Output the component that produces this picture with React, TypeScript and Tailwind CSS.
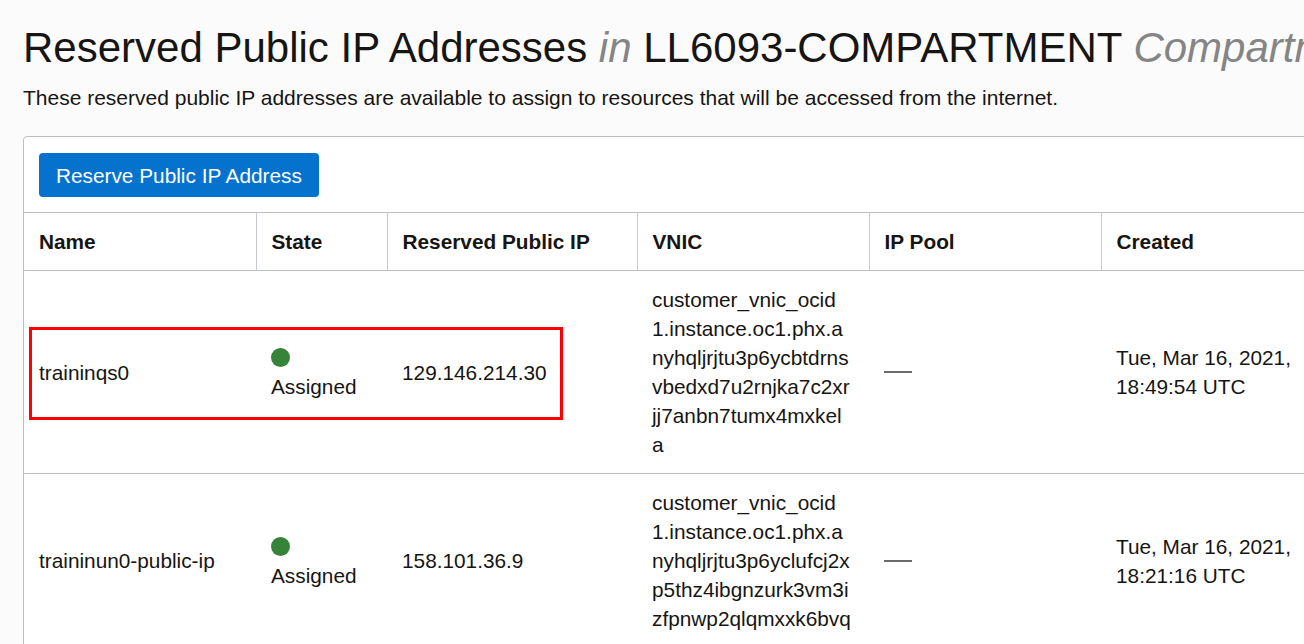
import React from "react";

type IpRow = {
  name: string;
  state: string;
  ip: string;
  vnic: string[];
  created: string[];
};

const rows: IpRow[] = [
  {
    name: "traininqs0",
    state: "Assigned",
    ip: "129.146.214.30",
    vnic: [
      "customer_vnic_ocid",
      "1.instance.oc1.phx.a",
      "nyhqljrjtu3p6ycbtdrns",
      "vbedxd7u2rnjka7c2xr",
      "jj7anbn7tumx4mxkel",
      "a",
    ],
    created: ["Tue, Mar 16, 2021,", "18:49:54 UTC"],
  },
  {
    name: "traininun0-public-ip",
    state: "Assigned",
    ip: "158.101.36.9",
    vnic: [
      "customer_vnic_ocid",
      "1.instance.oc1.phx.a",
      "nyhqljrjtu3p6yclufcj2x",
      "p5thz4ibgnzurk3vm3i",
      "zfpnwp2qlqmxxk6bvq",
    ],
    created: ["Tue, Mar 16, 2021,", "18:21:16 UTC"],
  },
];

const columns = [
  { label: "Name", width: "w-[232px]" },
  { label: "State", width: "w-[131px]" },
  { label: "Reserved Public IP", width: "w-[250px]" },
  { label: "VNIC", width: "w-[232px]" },
  { label: "IP Pool", width: "w-[232px]" },
  { label: "Created", width: "w-[300px]" },
];

export default function App() {
  return (
    <div className="min-h-screen overflow-hidden bg-[#fbfbfb] font-['Liberation_Sans',Arial,sans-serif] text-[#161513]">
      <div className="pl-[23px] pt-[27px]">
        <h1 className="whitespace-nowrap text-[42px] leading-none">
          Reserved Public IP Addresses <i className="text-[#858585]">in</i> LL6093-COMPARTMENT{" "}
          <i className="text-[#858585]">Compartment</i>
        </h1>
        <p className="mt-[14px] whitespace-nowrap text-[21px] leading-[29px]">
          These reserved public IP addresses are available to assign to resources that will be accessed from the internet.
        </p>

        <div className="relative mt-[24px] w-[1400px] rounded-tl-[4px] border border-[#bcc0c6] bg-white">
          <div className="px-[15px] pt-[16px] pb-[15px]">
            <button className="h-[44px] rounded-[4px] bg-[#0572ce] px-[17px] text-[20.8px] leading-[29px] text-white">
              Reserve Public IP Address
            </button>
          </div>

          <table className="table-fixed border-collapse text-left text-[20.8px] leading-[29px]">
            <thead>
              <tr className="border-y border-[#bcc0c6]">
                {columns.map((col, i) => (
                  <th
                    key={col.label}
                    className={`${col.width} px-[15px] py-[14px] font-bold ${
                      i < columns.length - 1 ? "border-r border-[#c6cacf]" : ""
                    }`}
                  >
                    {col.label}
                  </th>
                ))}
              </tr>
            </thead>
            <tbody>
              {rows.map((row) => (
                <tr key={row.name} className="border-b border-[#bcc0c6] align-middle">
                  <td className="px-[15px] py-[14px]">{row.name}</td>
                  <td className="px-[15px] py-[14px]">
                    <div className="flex h-[29px] items-center">
                      <span className="block h-[19px] w-[19px] rounded-full bg-[#358439]" />
                    </div>
                    <div>{row.state}</div>
                  </td>
                  <td className="px-[15px] py-[14px]">{row.ip}</td>
                  <td className="px-[15px] py-[14px]">
                    {row.vnic.map((line) => (
                      <div key={line}>{line}</div>
                    ))}
                  </td>
                  <td className="px-[15px] py-[14px]">
                    <span className="block h-[2px] w-[28px] bg-[#6b6b6b]" />
                  </td>
                  <td className="px-[15px] py-[14px]">
                    {row.created.map((line) => (
                      <div key={line}>{line}</div>
                    ))}
                  </td>
                </tr>
              ))}
            </tbody>
          </table>

          {/* annotation box over the first row */}
          <div className="pointer-events-none absolute left-[5px] top-[190px] h-[93px] w-[534px] border-[3px] border-[#ff0000]" />
        </div>
      </div>
    </div>
  );
}
